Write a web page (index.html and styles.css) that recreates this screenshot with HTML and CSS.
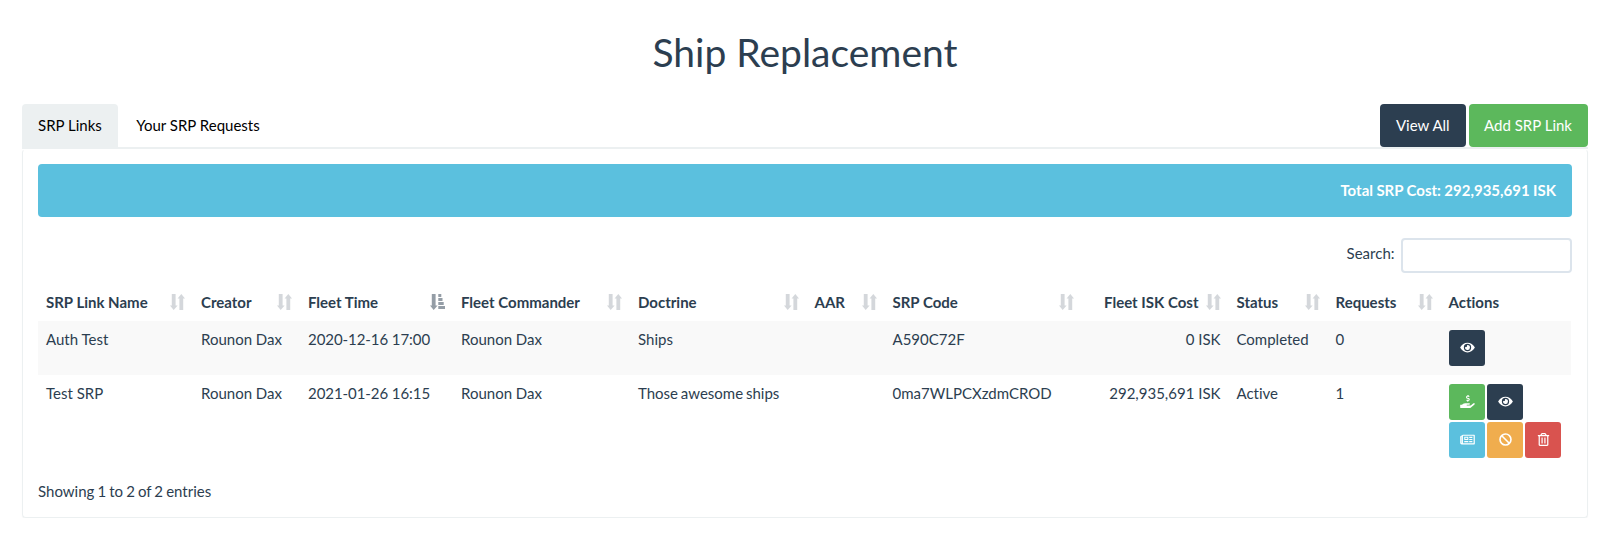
FILE: index.html
```html
<!DOCTYPE html>
<html lang="en">
<head>
<meta charset="utf-8">
<title>Ship Replacement</title>
<link rel="stylesheet" href="styles.css">
</head>
<body>
<svg class="defs" width="0" height="0">
  <symbol id="sort" viewBox="0 0 15 16"><path d="M1.800 0h3.800v11.500h2L3.700 16 0 11.500h1.800zM9.400 16h3.800V4.500H15L11.300 0 7.600 4.500h1.800z"/></symbol>
  <symbol id="sorted" viewBox="0 0 15 16"><path d="M1.800 0h3.800v11.500h2L3.700 16 0 11.500h1.800zM8.300 0h3v3H8.300zM8.300 4h4.200v3H8.300zM8.300 8h5.400v3H8.300zM8.300 12H15v3H8.300z"/></symbol>
  <symbol id="eye" viewBox="0 0 576 512"><path d="M572.5 241.4C518.3 135.6 410.9 64 288 64S57.700 135.600 3.500 241.400a32.400 32.400 0 0 0 0 29.200C57.700 376.400 165.100 448 288 448s230.300-71.600 284.500-177.400a32.400 32.400 0 0 0 0-29.200zM288 400a144 144 0 1 1 144-144 143.900 143.900 0 0 1-144 144zm0-240a95.300 95.300 0 0 0-25.300 3.800 47.900 47.900 0 0 1-66.900 66.900A95.800 95.800 0 1 0 288 160z"/></symbol>
  <symbol id="hand" viewBox="0 0 576 512"><path d="M271 144 327 160c6 2 11 8 11 15 0 9-6 16-14 16h-35c-7 0-13-2-18-6-4-2-9-2-12 1l-18 17c-5 4-4 11 0 15 10 8 22 13 35 13v17c0 9 7 16 16 16h15c9 0 16-7 16-16v-17c30 0 54-25 54-56 0-25-16-48-41-55l-56-16c-6-2-11-8-11-15 0-9 6-16 14-16h35c7 0 13 2 18 6 4 2 9 2 12-1l18-17c5-4 4-11 0-15-10-8-22-13-35-13V16c0-9-7-16-16-16h-15c-9 0-16 7-16 16v17c-30 0-54 25-54 56 0 25 16 48 41 55zM565 328c-12-11-31-10-43 0l-93 74c-11 9-25 14-40 14H272c-9 0-16-7-16-16s7-16 16-16h78c16 0 31-11 33-27 4-20-11-37-31-37H192c-27 0-53 9-74 26l-46 38H16c-9 0-16 7-16 16v96c0 9 7 16 16 16h357c14 0 28-5 40-14l151-121c16-13 17-37 1-49z"/></symbol>
  <symbol id="news" viewBox="0 0 576 512"><path fill-rule="evenodd" d="M552 64H112c-20 0-38 12-46 30l-32 10C14 109 0 128 0 148v236c0 35 29 64 64 64h488c13 0 24-11 24-24V88c0-13-11-24-24-24zM48 392V148l12-6v250zM528 400H108V112h420zM172 280h136c7 0 12-5 12-12V156c0-7-5-12-12-12H172c-7 0-12 5-12 12v112c0 7 5 12 12 12zm28-96h80v56h-80zM160 312h160v48H160zM356 152h124v48H356zM356 232h124v48H356zM356 312h124v48H356z"/></symbol>
  <symbol id="ban" viewBox="0 0 512 512"><path fill-rule="evenodd" d="M256 8a248 248 0 1 0 0 496 248 248 0 0 0 0-496zM386 126c66 66 70 166 20 235L151 106c69-50 169-46 235 20zM126 386c-66-66-70-166-20-235l255 255c-69 50-169 46-235-20z"/></symbol>
  <symbol id="trash" viewBox="0 0 448 512"><path fill-rule="evenodd" d="M268 416h24c7 0 12-5 12-12V188c0-7-5-12-12-12h-24c-7 0-12 5-12 12v216c0 7 5 12 12 12zM432 80h-82l-34-57c-9-14-24-23-41-23H173c-17 0-32 9-41 23L98 80H16C7 80 0 87 0 96v16c0 9 7 16 16 16h16v336c0 27 21 48 48 48h288c27 0 48-21 48-48V128h16c9 0 16-7 16-16V96c0-9-7-16-16-16zM172 51c1-2 3-3 5-3h94c2 0 4 1 5 3l18 29H154zM368 464H80V128h288zM156 416h24c7 0 12-5 12-12V188c0-7-5-12-12-12h-24c-7 0-12 5-12 12v216c0 7 5 12 12 12z"/></symbol>
</svg>
<main class="container">
  <h1 class="page-title">Ship Replacement</h1>
  <nav class="nav-tabs">
    <a class="tab active">SRP Links</a>
    <a class="tab">Your SRP Requests</a>
    <div class="nav-actions">
      <a class="btn btn-primary">View All</a>
      <a class="btn btn-success">Add SRP Link</a>
    </div>
  </nav>
  <section class="panel">
    <div class="alert">Total SRP Cost: 292,935,691 ISK</div>
    <label class="search">Search:<input class="search-input" type="search"></label>
    <table class="table">
      <colgroup><col class="c-name"><col class="c-creator"><col class="c-time"><col class="c-commander"><col class="c-doctrine"><col class="c-aar"><col class="c-code"><col class="c-cost"><col class="c-status"><col class="c-requests"><col class="c-actions"></colgroup>
      <thead><tr>
        <th><div class="head">SRP Link Name<svg class="sort"><use href="#sort"/></svg></div></th>
        <th><div class="head">Creator<svg class="sort"><use href="#sort"/></svg></div></th>
        <th><div class="head">Fleet Time<svg class="sort sorted"><use href="#sorted"/></svg></div></th>
        <th><div class="head">Fleet Commander<svg class="sort"><use href="#sort"/></svg></div></th>
        <th><div class="head">Doctrine<svg class="sort"><use href="#sort"/></svg></div></th>
        <th><div class="head">AAR<svg class="sort"><use href="#sort"/></svg></div></th>
        <th><div class="head">SRP Code<svg class="sort"><use href="#sort"/></svg></div></th>
        <th><div class="head head-right">Fleet ISK Cost<svg class="sort"><use href="#sort"/></svg></div></th>
        <th><div class="head">Status<svg class="sort"><use href="#sort"/></svg></div></th>
        <th><div class="head">Requests<svg class="sort"><use href="#sort"/></svg></div></th>
        <th><div class="head">Actions</div></th>
      </tr></thead>
      <tbody>
        <tr class="odd">
          <td>Auth Test</td><td>Rounon Dax</td><td class="date">2020-12-16 17:00</td><td>Rounon Dax</td><td>Ships</td><td></td><td>A590C72F</td><td class="amount">0 ISK</td><td>Completed</td><td>0</td>
          <td class="actions"><div class="action-list"><a class="action btn-primary"><svg class="icon"><use href="#eye"/></svg></a></div></td>
        </tr>
        <tr>
          <td>Test SRP</td><td>Rounon Dax</td><td class="date">2021-01-26 16:15</td><td>Rounon Dax</td><td class="tight">Those awesome ships</td><td></td><td>0ma7WLPCXzdmCROD</td><td class="amount">292,935,691 ISK</td><td>Active</td><td>1</td>
          <td class="actions"><div class="action-list">
            <a class="action btn-success"><svg class="icon"><use href="#hand"/></svg></a>
            <a class="action btn-primary"><svg class="icon"><use href="#eye"/></svg></a>
            <span class="line-break"></span>
            <a class="action btn-info"><svg class="icon"><use href="#news"/></svg></a>
            <a class="action btn-warning"><svg class="icon"><use href="#ban"/></svg></a>
            <a class="action btn-danger"><svg class="icon"><use href="#trash"/></svg></a>
          </div></td>
        </tr>
      </tbody>
    </table>
    <div class="table-info">Showing 1 to 2 of 2 entries</div>
  </section>
</main>
</body>
</html>
```
FILE: styles.css
```css
* { box-sizing: border-box; }
body { margin: 0; background: #fff; color: #2c3e50; font: 15px/21px Lato, sans-serif; font-variant-ligatures: none; }
.defs { display: block; }
.container { padding: 31px 18px 0 22px; }
.page-title { margin: 0 0 30px; font-size: 39px; font-weight: 400; line-height: 43px; text-align: center; }
.nav-tabs { display: flex; gap: 2px; height: 45px; border-bottom: 2px solid #ecf0f1; }
.tab { height: 44px; padding: 11px 16px; border-radius: 4px 4px 0 0; color: #000; }
.tab + .tab { padding-left: 16.5px; }
.tab.active { background: #ecf0f1; }
.nav-actions { display: flex; gap: 3px; margin-left: auto; }
.btn { height: 43px; padding: 11px 16px 11px 15.5px; border-radius: 4px; color: #fff; }
.btn-primary { background: #2c3e50; }
.btn-success { background: #5cb85c; }
.btn-info { background: #5bc0de; }
.btn-warning { background: #f0ad4e; }
.btn-danger { background: #d9534f; }
.panel { height: 369px; padding: 14px 15px; border: 1px solid #ecf0f1; border-top-color: transparent; border-radius: 4px; box-shadow: 0 1px 1px rgba(0, 0, 0, .05); }
.alert { height: 53px; margin-bottom: 21px; padding: 16px; border-radius: 4px; background: #5bc0de; color: #fff; font-weight: 700; text-align: right; word-spacing: -.25px; }
.search { display: flex; justify-content: flex-end; gap: 6.5px; height: 35px; line-height: 31px; }
.search-input { width: 171px; height: 35px; border: 2px solid #dce4ec; border-radius: 4px; background: #fff; }
.table { width: 1533px; margin-top: 10px; border-collapse: collapse; table-layout: fixed; }
.c-name { width: 155px; }
.c-creator { width: 107px; }
.c-time { width: 153px; }
.c-commander { width: 177px; }
.c-doctrine { width: 176.5px; }
.c-aar { width: 78px; }
.c-code { width: 197px; }
.c-cost { width: 147px; }
.c-status { width: 99px; }
.c-requests { width: 113px; }
.c-actions { width: 130.5px; }
th { height: 38px; padding: 8px; text-align: left; }
td { height: 54px; padding: 8px; vertical-align: top; white-space: nowrap; }
.head { display: flex; align-items: center; justify-content: space-between; height: 22px; white-space: nowrap; }
.head-right { justify-content: flex-end; gap: 7px; }
.sort { width: 15px; height: 16px; fill: currentColor; opacity: .2; }
.sorted { opacity: .5; }
.odd { background: #f9f9f9; }
.amount { text-align: right; }
.date { letter-spacing: -.07px; }
.tight { word-spacing: -1px; }
.actions { padding: 9px 8.5px; }
.action-list { display: flex; flex-wrap: wrap; gap: 2px; }
.line-break { width: 30px; }
.action { display: flex; align-items: center; justify-content: center; width: 36px; height: 36px; padding-bottom: 2px; border-radius: 3px; }
.icon { width: 15px; height: 13px; fill: #fff; }
.table-info { margin-top: 14px; word-spacing: -.75px; }
```
